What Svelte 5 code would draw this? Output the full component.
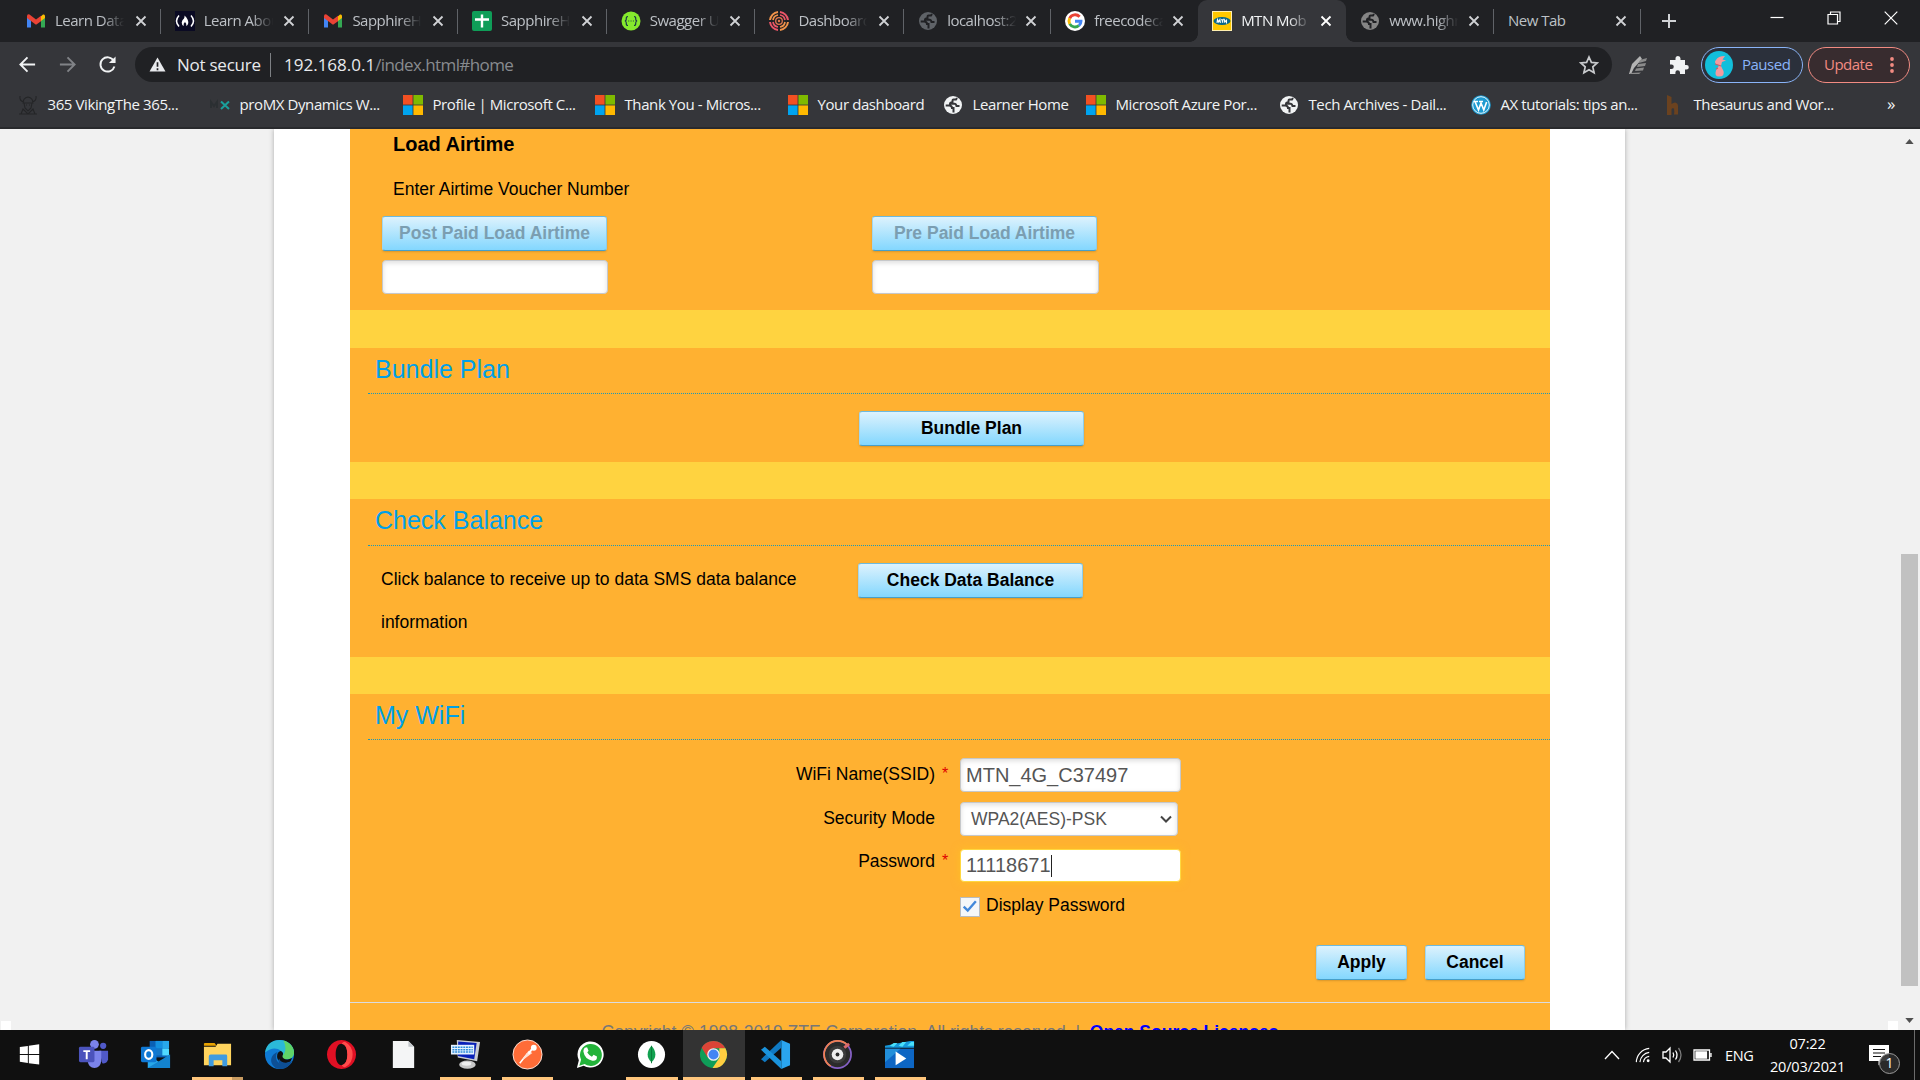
<script>
  const tabs = [
    { icon: 'gmail', label: 'Learn Data', width: 148.7, sep: true },
    { icon: 'fcc', label: 'Learn Abou', width: 148.7, sep: true },
    { icon: 'gmail', label: 'SapphireH', width: 148.7, sep: true },
    { icon: 'sheets', label: 'SapphireH', width: 148.7, sep: true },
    { icon: 'swagger', label: 'Swagger U', width: 148.7, sep: true },
    { icon: 'dash', label: 'Dashboard', width: 148.7, sep: true },
    { icon: 'globeDim', label: 'localhost:2', width: 147, sep: true },
    { icon: 'google', label: 'freecodeca', width: 147, sep: false },
    { icon: 'mtn', label: 'MTN Mob', width: 148, active: true },
    { icon: 'globeGrey', label: 'www.highr', width: 147.8, sep: true },
    { icon: '', label: 'New Tab', width: 147.5, sep: true },
  ];

  const bookmarks = [
    { icon: 'viking', label: '365 VikingThe 365...', width: 192 },
    { icon: 'promx', label: 'proMX Dynamics W...', width: 193 },
    { icon: 'ms', label: 'Profile | Microsoft C...', width: 192 },
    { icon: 'ms', label: 'Thank You - Micros...', width: 193 },
    { icon: 'ms', label: 'Your dashboard', width: 155 },
    { icon: 'globe', label: 'Learner Home', width: 143 },
    { icon: 'ms', label: 'Microsoft Azure Por...', width: 193 },
    { icon: 'globe', label: 'Tech Archives - Dail...', width: 192 },
    { icon: 'wp', label: 'AX tutorials: tips an...', width: 193 },
    { icon: 'thes', label: 'Thesaurus and Wor...', width: 191 },
  ];

  const apps = [
    { icon: 'start' },
    { icon: 'teams' },
    { icon: 'outlook' },
    { icon: 'explorer', open: true, stacked: true },
    { icon: 'edge' },
    { icon: 'opera' },
    { icon: 'file' },
    { icon: 'remote', open: true },
    { icon: 'postman', open: true },
    { icon: 'whatsapp' },
    { icon: 'mongo', open: true },
    { icon: 'chrome', open: true, current: true },
    { icon: 'vscode', open: true },
    { icon: 'groove', open: true },
    { icon: 'movies', open: true },
  ];
</script>

{#snippet globe(color, ink)}
  <svg class="fav" viewBox="0 0 20 20">
    <circle cx="10" cy="10" r="9" fill={color} />
    <path d="M2.700 10.500h3.500q2.800 0 2.800 2.500h1.500v4.500M14 3l-1 1.500h-2.500q-1 0-1 1.200v1.500q-2.500 0-2.500 1.600h4.500q1.500 0 2 2.200h3" fill="none" stroke={ink} stroke-width="2" />
  </svg>
{/snippet}

{#snippet favicon(name)}
  {#if name === 'gmail'}
    <svg class="fav" viewBox="0 0 20 20">
      <path d="M1 5v11.5h4V9z" fill="#4285f4" /><path d="M19 5v11.5h-4V9z" fill="#34a853" />
      <path d="M15 5.200l2-1.600Q19 3 19 5.200V7l-4 3z" fill="#fbbc04" />
      <path d="M1 7V5.200Q1 2.800 3.500 3.500L10 8.500l5-3.800v5.500L10 13.700 5 10z" fill="#ea4335" />
    </svg>
  {:else if name === 'fcc'}
    <svg class="fav" viewBox="0 0 20 20">
      <rect width="20" height="20" fill="#0a0a23" />
      <path d="M4 4.500Q-1 10 4 15.500M16 4.500q5 5.500 0 11" fill="none" stroke="#fff" stroke-width="1.500" />
      <path d="M9.500 4.500Q13.500 8 13.300 12q-.500 2.500-2 3 .500-2.500-1.300-4-2 1.500-1.300 4-2-.700-2-3.500Q7 9 9 7.500 9.800 6 9.500 4.500z" fill="#fff" />
    </svg>
  {:else if name === 'sheets'}
    <svg class="fav" viewBox="0 0 20 20"><rect width="20" height="20" rx="2" fill="#0f9d58" /><path d="M10 3.500v13M3 8.500h14" stroke="#fff" stroke-width="2.400" /></svg>
  {:else if name === 'swagger'}
    <svg class="fav" viewBox="0 0 20 20"><circle cx="10" cy="10" r="9.500" fill="#85ea2d" /><path d="M7 5.500q-2 0-1.700 2.500 0 2-1.500 2 1.500 0 1.500 2-.300 2.500 1.700 2.500M13 5.500q2 0 1.700 2.500 0 2 1.500 2-1.500 0-1.500 2 .300 2.500-1.700 2.500M7.300 10h.9M9.600 10h.9M11.900 10h.9" stroke="#173647" stroke-width="1.200" fill="none" /></svg>
  {:else if name === 'dash'}
    <svg class="fav" viewBox="0 0 20 20" fill="none">
      <path d="M9 1A9 9 0 0 0 1 9M11 19a9 9 0 0 0 8-8" stroke="#f1944a" stroke-width="2" /><path d="M11 1a9 9 0 0 1 8 8M1 11a9 9 0 0 0 8 8" stroke="#ec5568" stroke-width="2" />
      <path d="M9 4a6 6 0 0 0-5 5M11 16a6 6 0 0 0 5-5" stroke="#f1944a" stroke-width="1.700" /><path d="M11 4a6 6 0 0 1 5 5M4 11a6 6 0 0 0 5 5" stroke="#ec5568" stroke-width="1.700" />
      <circle cx="10" cy="10" r="3.300" stroke="#e0784e" stroke-width="1.300" /><circle cx="10" cy="10" r="1.200" fill="#e0784e" />
    </svg>
  {:else if name === 'globeDim'}{@render globe('#5f6368', '#202124')}
  {:else if name === 'globeGrey'}{@render globe('#858585', '#202124')}
  {:else if name === 'globe'}{@render globe('#f1f3f4', '#35363a')}
  {:else if name === 'google'}
    <svg class="fav" viewBox="0 0 20 20">
      <circle cx="10" cy="10" r="10" fill="#fff" />
      <g fill="none" stroke-width="2.900"><path d="M14.600 5.800A6 6 0 0 0 4.700 7.300" stroke="#ea4335" /><path d="M4.700 7.300a6 6 0 0 0 0 5.600" stroke="#fbbc05" /><path d="M4.700 12.900a6 6 0 0 0 9.200 1.600" stroke="#34a853" /><path d="M13.900 14.500A5.500 5.500 0 0 0 16 10.200h-6" stroke="#4285f4" /></g>
    </svg>
  {:else if name === 'mtn'}
    <svg class="fav" viewBox="0 0 20 20"><rect width="20" height="20" fill="#ffefb0" /><rect x="1" y="1" width="18" height="18" fill="#ffc800" /><ellipse cx="10" cy="10" rx="8.500" ry="4" fill="#07668a" /><path d="M5 11.800l.500-3.300L6.700 11l1.200-2.500.500 3.300M9 8.700h2.800M10.400 8.700v3M12.300 11.800V8.600l2.200 2.900V8.500" stroke="#fff" fill="none" stroke-width="1.100" /></svg>
  {:else if name === 'ms'}
    <svg class="fav" viewBox="0 0 20 20"><path d="M0 0h9.600v9.600H0z" fill="#f25022" /><path d="M10.400 0H20v9.600h-9.600z" fill="#7fba00" /><path d="M0 10.400h9.600V20H0z" fill="#00a4ef" /><path d="M10.400 10.400H20V20h-9.600z" fill="#ffb900" /></svg>
  {:else if name === 'viking'}
    <svg class="fav" viewBox="0 0 20 20" fill="none" stroke="#242527" stroke-width="1.100"><path d="M2 1q-1 5 4 6M18 1q1 5-4 6M5 8q0-5 5-6 5 1 5 6zM6 8l1 5 3 3 3-3 1-5M8 10h1M11 10h1M3 19l2-5 5 5 5-5 2 5zM1 19h18" /></svg>
  {:else if name === 'promx'}
    <svg class="fav" viewBox="0 0 20 20"><path d="M1 13V7l3 4 3-4v6" fill="none" stroke="#2b2f32" stroke-width="2" /><path d="M11 6.500l8 7.500M19 6.500L11 14" stroke="#1a9f9b" stroke-width="2" /></svg>
  {:else if name === 'wp'}
    <svg class="fav" viewBox="0 0 20 20"><circle cx="10" cy="10" r="9.800" fill="#1d9bd1" /><circle cx="10" cy="10" r="8.300" fill="none" stroke="#e8f6fc" /><path d="M4 6.500L7.500 15 10 8l2.800 7L15.600 7M3 6.500h4M8 6.500h4" fill="none" stroke="#fff" stroke-width="1.600" /></svg>
  {:else if name === 'thes'}
    <svg class="fav" viewBox="0 0 20 20"><path d="M3 0l4.500 2v7q4-3 6 0 1 2 .5 5v5.500h-4q.5-3 0-6-2-1-2.500 1v5.500H3z" fill="#6b421f" /></svg>
  {/if}
{/snippet}

{#snippet appIcon(name)}
  <svg class="app-svg" viewBox="0 0 32 32">
    {#if name === 'start'}
      <path d="M6 8.300l8.300-1.200v8.300H6zM15.300 7L26 5.500v9.900H15.300zM6 16.500h8.300v8.300L6 23.600zM15.300 16.500H26v9.900L15.300 25z" fill="#fff" />
    {:else if name === 'teams'}
      <circle cx="17" cy="5.500" r="4.500" fill="#7b83eb" /><circle cx="26" cy="7" r="3.200" fill="#5059c9" />
      <path d="M22 12h9v9q-1 5-6 4z" fill="#5059c9" /><path d="M11 12h13v11q-1 7-7 7t-7-7z" fill="#7b83eb" />
      <rect x="1" y="8" width="16" height="16" rx="1.500" fill="#4b53bc" /><path d="M5.500 12.500h7M9 12.500V21" stroke="#fff" stroke-width="2" />
    {:else if name === 'outlook'}
      <path d="M10 2h19v17H10z" fill="#0a5fb4" /><path d="M16 2h7v8h-7z" fill="#1490df" /><path d="M23 2h7v8h-7z" fill="#28a8ea" /><path d="M16 10h7v7h-7z" fill="#1477c8" /><path d="M23 10h7v7h-7z" fill="#50d9ff" />
      <path d="M8 16l12 8 11-8v14H8z" fill="#28a8ea" /><path d="M8 30l23-14v14z" fill="#1383cf" />
      <rect x="1" y="8" width="16" height="16" rx="1.500" fill="#0f78d4" /><ellipse cx="9" cy="16" rx="3.700" ry="4.500" stroke="#fff" stroke-width="2.200" fill="none" />
    {:else if name === 'explorer'}
      <path d="M2 5q0-1 1-1h10l2 3H2z" fill="#e8a200" /><path d="M2 8h12l2-3h14v22H2z" fill="#ffd45e" /><path d="M7 28V18q0-2 2-2h16q1 0 1 2v10h-5v-6h-9v6z" fill="#3f9be0" />
    {:else if name === 'edge'}
      <circle cx="16" cy="16" r="15" fill="#0f7ad4" />
      <path d="M1.200 14C2 5 9 1 16 1c9 0 15 6 15 13 0 5-4 7-8 7-4 0-5-2-4-4 1-6-9-11-17.800-3z" fill="#2bb9d8" />
      <path d="M20 1.600c7 2 11 7 11 12.400 0 5-4 7-8 7-4 0-5-2-4-4 4-3 4-9 1-15.400z" fill="#5fd468" />
      <path d="M12.500 17c-1 7 6 12 14.500 9-4 5-9 5.500-14 4.500C4 25 7 16 14 13.500q-1.200 1.500-1.500 3.500z" fill="#0d4f95" />
      <path d="M17 12.500c2.500.500 3.500 3 2 5 0 3 4 4.500 8 3l2-1-1.500 3.500c-5 4-14 1-14-5 0-3 1.500-5 3.500-5.500z" fill="#101010" />
      <path d="M15.500 20c2 5 8 5.500 12.500 3l1 .5c-2 4-7 6-11 4-3-2-3.500-5-2.500-7.500z" fill="#0d4f95" />
    {:else if name === 'opera'}
      <path fill-rule="evenodd" d="M16 1a15 15 0 1 0 .01 0zM16 5c4 0 6 5 6 11s-2 11-6 11-6-5-6-11 2-11 6-11z" fill="#e01024" />
      <path d="M20 3a15 15 0 0 1 0 26q-2 .500-4-2 6-1 6-11T16 5q2-2.500 4-2z" fill="#ff4b4b" />
    {:else if name === 'file'}
      <path d="M5 2h16l6 6v22H5z" fill="#f4f5f6" /><path d="M21 2l6 6h-6z" fill="#c3c7cb" />
    {:else if name === 'remote'}
      <path d="M7 1l24 2-3 20-20-4z" fill="#c9ccd1" /><path d="M8.500 2.500l19 1.500-2.500 17-17-3.500z" fill="#0820b8" />
      <rect x="1" y="6" width="24" height="10" fill="#e5f2ff" /><path d="M2.500 8.500h21M2.500 11h21M2.500 13.500h21" stroke="#2c8bd8" stroke-width="1.600" stroke-dasharray="2 .8" />
      <ellipse cx="18" cy="26.500" rx="8.500" ry="4.300" fill="#c8c8c8" /><ellipse cx="17" cy="25.500" rx="5" ry="2" fill="#f0f0f0" />
    {:else if name === 'postman'}
      <circle cx="16" cy="16" r="15" fill="#ff6c37" stroke="#ffe2d6" /><path d="M8 25l8-10" stroke="#fff" stroke-width="1.600" /><path d="M11 21l6-9 4 2.500-8 6z" fill="#ffe0d2" /><circle cx="22.500" cy="9" r="3" fill="#fff" /><path d="M17 15l4-5" stroke="#fff" stroke-width="2" />
    {:else if name === 'whatsapp'}
      <path d="M3 30l2-8A13.500 13.500 0 1 1 10 27.500z" fill="#fff" /><path d="M5.500 27.500l1.800-6A11.300 11.300 0 1 1 11 25.800z" fill="#23b33a" /><path d="M11 9l2.500-.500L15 12l-1.300 2q1.800 3 4.800 4.300l1.700-2 3.500 1.800Q24 23 19 22.500 11 21 9.700 13 9.500 11 11 9z" fill="#fff" />
    {:else if name === 'mongo'}
      <circle cx="16" cy="16" r="14" fill="#fff" /><path d="M16 7q4 4.500 4 9t-4 8q-4-3.500-4-8t4-9z" fill="#12a150" /><path d="M16 7v18" stroke="#0a7d3b" />
    {:else if name === 'chrome'}
      <circle cx="16" cy="16" r="14" fill="#0f9d58" /><path d="M3.800 9A14 14 0 0 1 28.300 9.500H16L10 19z" fill="#db4437" /><path d="M28.300 9.500A14 14 0 0 1 15 30l7-10.500V9.500z" fill="#ffcd40" /><circle cx="16" cy="16" r="6.500" fill="#f1f1f1" /><circle cx="16" cy="16" r="5.200" fill="#4285f4" />
    {:else if name === 'vscode'}
      <path d="M22 1l9 4v22l-9 4z" fill="#2aa5ef" /><path d="M22 1v8L5 24l-4-3z" fill="#0f79c2" /><path d="M5 8l17 15v8L1 11z" fill="#1a93dc" />
    {:else if name === 'groove'}
      <circle cx="16" cy="16" r="14" fill="#2b2b2b" stroke="#8661c5" stroke-width="1.800" /><path d="M26 6A14 14 0 1 0 9 28" fill="none" stroke="#f08050" stroke-width="1.800" /><circle cx="16" cy="16" r="9" fill="#3c3c3c" /><circle cx="16" cy="16" r="6" fill="#eee" /><circle cx="16" cy="16" r="2" fill="#2b2b2b" /><path d="M23 9l5-4" stroke="#d9676c" stroke-width="3" />
    {:else if name === 'movies'}
      <path d="M1 7l26-5 4 0v7H1z" fill="#1598dc" /><path d="M6 7l4-3h4l-4 4zM15 7l4-4h4l-4 5zM24 7l4-4h3v4z" fill="#4ae0fa" /><path d="M1 10h30v20H1z" fill="#0d66c4" /><path d="M1 10h16L1 24z" fill="#228fda" /><path d="M12 13l11 7-11 7z" fill="#fff" />
    {/if}
  </svg>
{/snippet}

<div class="screen">
  <header class="tabstrip">
    {#each tabs as tab}
      <div class="tab" style="width: {tab.width}px" class:active={tab.active} class:sep={tab.sep} class:plain={!tab.icon}>
        {#if tab.icon}{@render favicon(tab.icon)}{/if}
        <span class="tab-label">{tab.label}</span>
        <svg class="x" viewBox="0 0 12 12"><path d="M1.500 1.500l9 9M10.500 1.500l-9 9" /></svg>
      </div>
    {/each}
    <svg class="plus" viewBox="0 0 16 16"><path d="M8 1v14M1 8h14" /></svg>
    <div class="window-buttons">
      <svg viewBox="0 0 14 14"><path d="M.5 6.500h13" /></svg>
      <svg viewBox="0 0 14 14"><path d="M1 3.500h9.500V13H1zM3.500 3.500V1H13v9.500h-2.500" /></svg>
      <svg viewBox="0 0 14 14"><path d="M.7 .7l12.600 12.600M13.300 .7L.7 13.300" /></svg>
    </div>
  </header>

  <div class="toolbar">
    <svg class="nav" viewBox="0 0 20 20"><path d="M18 10H3M10 2.500L2.500 10l7.500 7.500" /></svg>
    <svg class="nav dim" viewBox="0 0 20 20"><path d="M2 10h15M10 2.500l7.500 7.500-7.500 7.500" /></svg>
    <svg class="nav" viewBox="0 0 20 20"><path d="M16.500 6A7.500 7.500 0 1 0 17.300 12" /><path d="M18.500 1.500v7h-7z" fill="#f1f3f4" stroke="none" /></svg>
    <div class="omnibox">
      <svg class="warn" viewBox="0 0 18 16"><path d="M9 .5L17.500 15.500H.500z" fill="#e8eaed" /><path d="M9 5.500v5M9 12v2" stroke="#202124" stroke-width="1.800" /></svg>
      <span class="secure">Not secure</span>
      <i class="bar"></i>
      <span class="url"><b>192.168.0.1</b>/index.html#home</span>
      <svg class="star" viewBox="0 0 20 20"><path d="M10 2l2.400 5.400 5.800.6-4.400 3.900 1.300 5.800L10 14.700l-5.100 3 1.300-5.800L1.800 8l5.800-.6z" /></svg>
    </div>
    <svg class="pen" viewBox="0 0 20 20"><path d="M1 19L4 9l8-8 2 3-8 9-3 6z" fill="#b4b4b4" /><path d="M12 5l7-2-1 3-7 2zM10 9l8-1-1 3-8 1zM8 13.500l8-1-1 3-8 .5zM2 18l11-.500-2 1.500H2z" fill="#8b8b8b" /></svg>
    <svg class="puzzle" viewBox="0 0 20 20"><path d="M1 5h5.500V3.500a2.500 2.500 0 0 1 5 0V5H16v5h1.500a2.300 2.300 0 0 1 0 4.600H16V19h-5v-1.500a2.300 2.300 0 0 0-4.600 0V19H1v-5h1.500a2.300 2.300 0 0 0 0-4.600H1z" /></svg>
    <div class="pill paused">
      <svg class="avatar" viewBox="0 0 28 28"><circle cx="14" cy="14" r="14" fill="#12bfdc" /><path d="M20 5q-7 0-9 4-2 2 0 4l3 1.500-3 5q-2 6 3 6 6 0 4.500-5.500L16 15l1-4 4-1.500-3.500-1z" fill="#f29a9e" /><path d="M10 13l6 2M13 17l-2 1" stroke="#c65f6c" stroke-width="1.300" /></svg>
      <span>Paused</span>
    </div>
    <div class="pill update"><span>Update</span><svg class="dots" viewBox="0 0 4 18"><circle cx="2" cy="3" r="1.900" /><circle cx="2" cy="9" r="1.900" /><circle cx="2" cy="15" r="1.900" /></svg></div>
  </div>

  <nav class="bookmarks">
    {#each bookmarks as mark}
      <div class="mark" style="width: {mark.width}px">{@render favicon(mark.icon)}<span>{mark.label}</span></div>
    {/each}
    <span class="more">»</span>
  </nav>

  <div class="viewport">
    <i class="gutter-chip"></i>
    <div class="sheet">
      <main class="content">
        <section class="airtime">
          <h3>Load Airtime</h3>
          <p>Enter Airtime Voucher Number</p>
          <div class="vouchers">
            <div><button class="btn wide" disabled>Post Paid Load Airtime</button><div class="field"></div></div>
            <div><button class="btn wide" disabled>Pre Paid Load Airtime</button><div class="field second"></div></div>
          </div>
        </section>
        <section class="bundle">
          <h2>Bundle Plan</h2>
          <button class="btn wide">Bundle Plan</button>
        </section>
        <section class="balance">
          <h2>Check Balance</h2>
          <div class="balance-row">
            <p>Click balance to receive up to data SMS data balance<br />information</p>
            <button class="btn wide">Check Data Balance</button>
          </div>
        </section>
        <section class="wifi">
          <h2>My WiFi</h2>
          <div class="row"><label for="ssid">WiFi Name(SSID)</label><em>*</em><div class="field" id="ssid">MTN_4G_C37497</div></div>
          <div class="row mode"><label for="mode">Security Mode</label><em></em><div class="field select" id="mode">WPA2(AES)-PSK<svg viewBox="0 0 12 8"><path d="M1 1.500L6 6.500l5-5" /></svg></div></div>
          <div class="row pass"><label for="pass">Password</label><em>*</em><div class="field focus" id="pass">11118671<i class="caret"></i></div></div>
          <div class="check"><svg viewBox="0 0 20 20"><path d="M3 9.500l4.500 4.500L16.500 3.500" /></svg><span>Display Password</span></div>
          <div class="actions"><button class="btn apply">Apply</button><button class="btn cancel">Cancel</button></div>
          <footer>Copyright © 1998-2019 ZTE Corporation. All rights reserved &nbsp;|&nbsp; <b>Open Source Licenses</b></footer>
        </section>
      </main>
    </div>
    <i class="gutter-chip right"></i>
    <div class="scrollbar">
      <svg viewBox="0 0 10 6"><path d="M5 0l5 6H0z" /></svg>
      <i class="thumb"></i>
      <svg viewBox="0 0 10 6"><path d="M5 6l5-6H0z" /></svg>
    </div>
  </div>

  <div class="taskbar">
    {#each apps as app}
      <div class="app" class:open={app.open} class:current={app.current} class:stacked={app.stacked}>{@render appIcon(app.icon)}</div>
    {/each}
    <div class="tray">
      <svg class="up" viewBox="0 0 16 10"><path d="M1 9l7-7.500L15 9" /></svg>
      <svg class="wifi-icon" viewBox="0 0 18 18"><path d="M1.500 17A16 16 0 0 1 16 1.500M5.500 17A12 12 0 0 1 16 6M9.500 17a7.500 7.500 0 0 1 6.500-6.500" /><circle cx="14.800" cy="15.500" r="1.600" fill="#fff" stroke="none" /></svg>
      <svg class="vol" viewBox="0 0 21 18"><path d="M1 6h3l4-4v14l-4-4H1zM11 6.500q1.500 2.500 0 5M13.500 4.500q3 4.500 0 9" /><path d="M16.500 2q5 7 0 14" opacity=".45" /></svg>
      <svg class="bat" viewBox="0 0 19 12"><path d="M1 1h15.500v10H1zM18 4v4" /><path d="M3 3h10.500v6H3z" fill="#fff" /></svg>
      <span class="lang">ENG</span>
      <div class="clock"><span>07:22</span><span>20/03/2021</span></div>
      <div class="notice">
        <svg viewBox="0 0 20 21"><path d="M0 0h20v16h-7l-3.500 4.500V16H0z" fill="#fff" /><path d="M4 4.500h12M4 8h12M4 11.500h8" stroke="#101010" stroke-width="1.200" /></svg>
        <span>1</span>
      </div>
      <i class="edge-line"></i>
    </div>
  </div>
</div>

<style>
  :global(body) { margin: 0; }
  .screen { width: 1920px; height: 1080px; overflow: hidden; display: flex; flex-direction: column; background: #f1f1f1; font-family: 'Open Sans', 'Noto Sans', sans-serif; }
  .screen * { box-sizing: border-box; }
  svg { display: block; flex: none; }
  .fav { width: 20px; height: 20px; }

  .tabstrip { height: 42px; flex: none; display: flex; align-items: center; padding-left: 12px; background: #202124; }
  .tab { height: 42px; flex: none; display: flex; align-items: center; padding: 0 14px 0 14px; position: relative; color: #bdc1c6; font-size: 15px; }
  .tab.sep::after { content: ''; position: absolute; right: 0; top: 9px; width: 1px; height: 25px; background: #606368; }
  .tab-label { width: 70px; flex: none; margin: -2px auto 0 9px; overflow: hidden; white-space: nowrap; letter-spacing: -.5px; line-height: 24px; mask-image: linear-gradient(90deg, #000 68%, transparent 99%); }
  .plain .tab-label { margin-left: 0; mask-image: none; }
  .tab.active { background: #35363a; color: #f1f3f4; border-radius: 9px 9px 0 0; }
  .tab.active::before, .tab.active::after { content: ''; position: absolute; bottom: 0; width: 8px; height: 8px; }
  .tab.active::before { left: -8px; background: radial-gradient(circle at 0 0, transparent 7.500px, #35363a 8px); }
  .tab.active::after { right: -8px; background: radial-gradient(circle at 100% 0, transparent 7.500px, #35363a 8px); }
  .x { width: 12px; height: 12px; fill: none; stroke: #d0d2d5; stroke-width: 1.800; }
  .active .x { stroke: #fff; }
  .plus { width: 16px; height: 16px; margin-left: 20px; stroke: #d0d2d5; stroke-width: 2; }
  .window-buttons { margin-left: auto; display: flex; gap: 43px; padding: 0 22px 6px 0; fill: none; stroke: #fff; stroke-width: 1.200; }
  .window-buttons svg { width: 14px; height: 14px; }

  .toolbar { height: 45px; flex: none; display: flex; align-items: center; padding-left: 18px; background: #35363a; }
  .nav { width: 19px; height: 19px; margin-right: 21px; fill: none; stroke: #f1f3f4; stroke-width: 2; }
  .nav.dim { stroke: #818387; }
  .nav:nth-of-type(3) { margin-right: 18px; }
  .omnibox { width: 1477px; height: 35px; flex: none; display: flex; align-items: center; border-radius: 18px; background: #202124; padding: 0 13px 0 14px; font-size: 17px; white-space: nowrap; color: #888b8f; }
  .warn { width: 17px; height: 15px; }
  .secure { width: 83px; margin-left: 11px; letter-spacing: -.25px; color: #e8eaed; }
  .bar { width: 1px; height: 24px; margin: 0 13px 0 10px; background: #7d8084; }
  .url { letter-spacing: -.6px; }
  .url b { font-weight: 400; letter-spacing: 0; color: #e8eaed; }
  .star { width: 20px; height: 20px; margin-left: auto; fill: none; stroke: #c8cacd; stroke-width: 1.700; }
  .pen { width: 20px; height: 20px; margin-left: 16px; }
  .puzzle { width: 20px; height: 20px; margin: 0 12px 0 21px; fill: #f1f3f4; }
  .pill { height: 36px; flex: none; display: flex; align-items: center; border-radius: 18px; font-size: 15px; letter-spacing: -.5px; }
  .pill span { margin-top: -1px; }
  .paused { width: 102px; border: 1.500px solid #8ab4f8; color: #8ab4f8; background: #2b303b; padding-left: 3px; gap: 9px; }
  .avatar { width: 28px; height: 28px; }
  .update { width: 102px; margin-left: 5px; border: 1.500px solid #f28b82; color: #f28b82; background: #382c2f; padding: 0 15px 0 15px; justify-content: space-between; }
  .dots { width: 4px; height: 18px; fill: #f28b82; }

  .bookmarks { height: 42px; flex: none; display: flex; align-items: center; padding: 0 0 5px 18px; background: #35363a; border-bottom: 2px solid #292a2d; color: #f1f3f4; font-size: 15px; letter-spacing: -.4px; white-space: nowrap; }
  .mark { flex: none; display: flex; align-items: center; gap: 9.500px; }
  .mark span { margin-top: -1px; }
  .more { margin-left: 32px; font-size: 17px; margin-top: -2px; }

  .viewport { height: 901px; flex: none; display: flex; background: #f1f1f1; color: #000; font: 17.500px 'Liberation Sans', Arial, sans-serif; overflow: hidden; }
  .gutter-chip { width: 10px; height: 9px; margin: 0 263px 0 1px; align-self: flex-end; background: #fff; flex: none; }
  .gutter-chip.right { margin: 0 0 0 263px; }
  .sheet { width: 1351px; flex: none; background: #fff; padding: 0 75px 0 76px; box-shadow: 0 0 5px #aaa; }
  .content { width: 1200px; height: 901px; overflow: hidden; background: #ffd340; display: flex; flex-direction: column; }
  section { background: #ffb131; flex: none; }
  h2, h3, p { margin: 0; font-weight: 400; }
  h2 { height: 46px; margin-left: 18px; padding-left: 7px; border-bottom: 1px dotted #1b98b8; color: #00a0e9; font-size: 25px; line-height: 43px; }
  .btn { height: 35px; flex: none; display: block; padding: 0 0 2px; border: 1px solid #6cbadf; border-left-color: #a0d6ef; border-right-color: #8ccdeb; border-bottom-color: #479fc9; border-radius: 3px; background: linear-gradient(#ddf2fd, #83d7fe); color: #000; font: 700 17.500px/30px 'Liberation Sans', Arial, sans-serif; box-shadow: 0 1px 2px rgba(0, 0, 0, .15); }
  .btn:disabled { color: #7b9eb1; }
  .wide { width: 225px; }
  .field { width: 226px; height: 34px; background: #fff; border: 1px solid #c6c8ca; border-radius: 4px; box-shadow: inset 0 2px 5px rgba(0, 0, 0, .13); }
  .airtime { height: 181px; padding-left: 32px; }
  h3 { height: 30px; padding-left: 11px; font-size: 20px; font-weight: 700; line-height: 31px; }
  .airtime p { height: 57px; padding: 15px 0 0 11px; line-height: 31px; }
  .vouchers { display: flex; gap: 264px; }
  .vouchers .field { margin-top: 9px; }
  .vouchers .field.second { width: 227px; }
  .bundle { height: 114px; margin-top: 38px; }
  .bundle .btn { margin: 17px 0 0 509px; }
  .balance { height: 158px; margin-top: 37px; }
  .balance h2 { height: 47px; line-height: 43px; }
  .balance-row { display: flex; padding: 17px 0 0 31px; }
  .balance p { width: 477px; line-height: 43px; margin-top: -5px; }
  .wifi { height: 340px; margin-top: 37px; }
  .wifi h2 { height: 46px; line-height: 43px; }
  .row { display: flex; margin-top: 18px; }
  .row label { width: 585px; text-align: right; line-height: 33px; }
  .row em { width: 25px; padding-left: 7px; line-height: 31px; font-style: normal; color: #e00000; font-size: 16px; }
  .row .field { width: 221px; padding-left: 5px; font-size: 20px; line-height: 33px; color: #555; }
  .row.mode { margin-top: 10px; }
  .row .select { width: 218px; padding: 0 5px 0 10px; display: flex; align-items: center; justify-content: space-between; font-size: 17.500px; line-height: 31px; }
  .select svg { width: 12px; height: 8px; fill: none; stroke: #444; stroke-width: 2; }
  .row.pass { margin-top: 13px; }
  .pass label, .pass em { margin-top: -4px; }
  .row .focus { height: 33px; display: flex; align-items: center; line-height: 31px; border-color: #ffd840; box-shadow: 0 0 9px rgba(255, 200, 30, .6); }
  .caret { width: 1px; height: 22px; background: #222; }
  .check { display: flex; margin: 11px 0 0 610px; gap: 6px; line-height: 20px; padding-top: 4px; }
  .check span { margin-top: -2px; }
  .check svg { width: 20px; height: 20px; background: #f5f7f9; border: 1px solid #b8bcc0; fill: none; stroke: #4388da; stroke-width: 2.600; }
  .actions { display: flex; gap: 18px; justify-content: flex-end; padding: 28px 25px 22px 0; }
  .apply { width: 91px; }
  .cancel { width: 100px; }
  footer { border-top: 1px solid #dadce0; padding-top: 18px; line-height: 22px; color: #777; text-align: center; white-space: nowrap; height: 40px; padding-right: 20px; }
  footer b { color: #00f; }
  .scrollbar { width: 22px; height: 901px; margin-left: auto; display: flex; flex-direction: column; align-items: center; padding: 10px 0 7px; background: #f1f1f1; }
  .scrollbar svg { width: 9px; height: 5px; fill: #505050; }
  .thumb { width: 17px; height: 432px; margin: 410px 0 auto; background: #c1c1c1; }

  .taskbar { height: 50px; flex: none; display: flex; background: #101010; color: #fff; }
  .app { width: 62.050px; height: 50px; flex: none; display: flex; justify-content: center; padding-top: 9px; position: relative; }
  .app-svg { width: 31px; height: 31px; }
  .app:first-child .app-svg { margin-right: 3px; }
  .open::after { content: ''; position: absolute; left: 6px; right: 5px; bottom: 0; height: 3px; background: #ffc67c; }
  .current { background: #333; }
  .current::after { left: 0; right: 0; }
  .stacked::after { background: linear-gradient(90deg, #ffc67c 40px, #c99c62 40px); }
  .tray { margin-left: auto; display: flex; align-items: center; fill: none; stroke: #fff; stroke-width: 1.300; }
  .up { width: 16px; height: 10px; margin-right: 15px; }
  .wifi-icon { width: 16px; height: 18px; margin-right: 11px; }
  .vol { width: 21px; height: 18px; margin-right: 10px; }
  .bat { width: 19px; height: 12px; margin-right: 13px; }
  .lang { width: 28px; margin-right: 16px; font-size: 14.500px; letter-spacing: -.4px; }
  .clock { width: 77px; display: flex; flex-direction: column; align-items: center; font-size: 14.500px; line-height: 23px; letter-spacing: -.2px; }
  .notice { width: 31px; height: 38px; margin: 2px 0 0 23px; position: relative; }
  .notice svg { width: 20px; height: 21px; margin-top: 8px; stroke: none; }
  .notice span { position: absolute; left: 10px; top: 16px; width: 21px; height: 21px; border: 1px solid #9a9a9a; border-radius: 50%; background: rgba(45, 45, 45, .92); font-size: 14px; line-height: 18px; text-align: center; }
  .edge-line { width: 1px; height: 50px; margin: 0 5px 0 14px; background: #6b6b6b; }
</style>
